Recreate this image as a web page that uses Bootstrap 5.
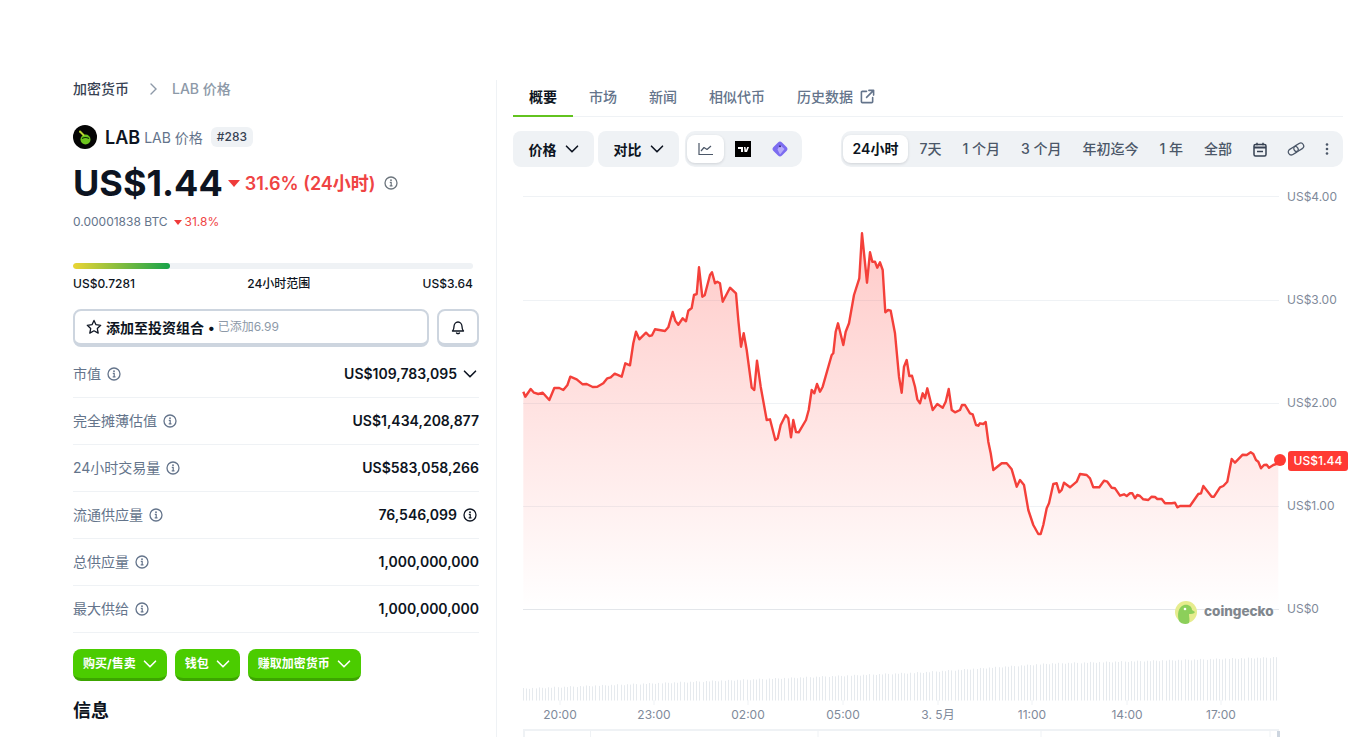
<!DOCTYPE html>
<html lang="zh-CN">
<head>
  <meta charset="UTF-8" />
  <title>LAB 价格</title>
  <link href="https://cdn.jsdelivr.net/npm/bootstrap@5.3.3/dist/css/bootstrap.min.css" rel="stylesheet" />
  <style>
    html, body {
      height: 100%;
      overflow: hidden;
      background: #fff;
    }
    body {
      font-family: Inter, "Noto Sans CJK SC", sans-serif;
      font-size: 14px;
      color: #0d1421;
    }
    .page-wrap { padding: 80px 0 0 73px; height: 737px; }
    .left-col { width: 423px; padding-right: 17px; flex: none; }
    .right-col { width: 847px; border-left: 1px solid #eff2f5; padding-left: 16px; flex: none; }

    .crumbs { line-height: 18px; font-weight: 500; color: #364152; }
    .crumbs .sep { margin: 0 13px 0 20px; color: #8d99a8; }
    .crumbs .here { color: #8d99a8; }
    .title-row { margin-top: 27px; height: 24px; }
    .coin-logo { width: 24px; height: 24px; margin-right: 8px; }
    .coin-sym { font-size: 18px; font-weight: 600; margin-right: 4px; }
    .coin-sub { color: #64748b; }
    .rank-tag { margin-left: 8px; padding: 0 6px; height: 20px; line-height: 20px; font-size: 12px; font-weight: 500; background: #eff2f5; border-radius: 6px; color: #364152; }
    .price-row { margin-top: 12px; height: 44px; }
    .price-big { font-size: 36px; font-weight: 700; line-height: 44px; }
    .tri { width: 0; height: 0; border-left: 6px solid transparent; border-right: 6px solid transparent; border-top: 7px solid #ef3b3a; margin: 0 5px 0 5px; }
    .price-chg { font-size: 18px; font-weight: 600; color: #ef4444; }
    .btc-row { margin-top: 8px; line-height: 18px; font-size: 12px; color: #64748b; }
    .btc-row .tri { border-left-width: 4px; border-right-width: 4px; border-top-width: 5px; margin: 0 3px 0 6px; }
    .btc-row .down { color: #ef4444; }

    .range-track { margin-top: 32px; width: 400px; height: 6px; background: #eff2f5; border-radius: 3px; overflow: hidden; }
    .range-fill { height: 6px; border-radius: 3px; background: linear-gradient(90deg, #ebd534, #16a34a); }
    .range-labels { width: 400px; margin-top: 6px; line-height: 18px; font-size: 12px; font-weight: 500; color: #0d1421; }

    .add-row { margin-top: 16px; gap: 8px; }
    .out-btn { height: 38px; background: #fff; border: 2px solid #cdd5df; border-bottom-width: 4px; border-radius: 8px; padding: 0 11px; }
    .out-btn:hover { background: #fff; border-color: #cdd5df; }
    .out-btn.wide { width: 357px; font-size: 14px; font-weight: 700; color: #0d1421; }
    .out-btn.bell { width: 42px; justify-content: center; }
    .out-btn small { font-size: 12px; font-weight: 400; color: #8d99a8; }
    .dot-sep { margin: 0 3px 0 4px; }

    .stat-list { margin-top: 4px; width: 406px; }
    .stat-line { height: 47px; border-bottom: 1px solid #eff2f5; padding-bottom: 1px; }
    .stat-name { color: #64748b; gap: 6px; }
    .stat-val { font-weight: 600; color: #0d1421; gap: 6px; }
    .tail-ico { margin-right: 2px; }

    .green-row { margin-top: 16px; gap: 8px; }
    .green-btn { height: 32px; padding: 0 10px; gap: 7px; font-size: 12px; font-weight: 700; color: #fff; background: #4bcc00; border: 0; border-bottom: 3px solid #3ca500; border-radius: 8px; }
    .green-btn:hover { color: #fff; background: #4bcc00; border-bottom-color: #3ca500; }
    .info-head { margin: 16px 0 0; font-size: 18px; font-weight: 700; line-height: 28px; }

    .tab-row { width: 830px; height: 37px; border-bottom: 1px solid #eff2f5; }
    .tab-row .nav-link { height: 37px; padding: 8px 16px 0; line-height: 18px; font-weight: 500; color: #64748b; border-bottom: 2px solid transparent; gap: 7px; }
    .tab-row .nav-link.active { color: #0d1421; font-weight: 600; border-bottom-color: #62c31f; }
    .tab-ext { margin-top: 1px; }

    .tool-row { width: 830px; margin-top: 14px; height: 36px; }
    .tool-btn { width: 81px; height: 36px; padding: 0; gap: 8px; justify-content: center; font-size: 14px; font-weight: 600; color: #0d1421; background: #eff2f5; border: 0; border-radius: 8px; margin-right: 4px; }
    .tool-btn:hover { background: #eff2f5; color: #0d1421; }
    .pill-group { height: 36px; background: #eff2f5; border-radius: 10px; padding: 4px 2px; gap: 1px; }
    .types { margin-left: 2px; width: 117px; gap: 0; }
    .type-item { width: 37px; height: 28px; border-radius: 8px; }
    .pill-active { background: #fff; box-shadow: 0 1px 3px rgba(13, 20, 33, .14); }
    .ranges { margin-left: auto; }
    .range-item { height: 28px; padding: 0 10px; border-radius: 8px; line-height: 28px; font-weight: 500; color: #4b5768; white-space: nowrap; }
    .range-item.pill-active { font-weight: 600; color: #0d1421; }
    .range-item.ico-link { padding: 0 9px; }
    .range-item.ico-dots { padding: 0 12px 0 10px; }

    .chart-svg { display: block; margin-top: 13px; overflow: visible; }
    .chart-svg text { font-family: Inter, "Noto Sans CJK SC", sans-serif; font-size: 12px; fill: #7f8a9a; }
    .chart-svg .tag-text { fill: #fff; font-weight: 500; }
    .chart-svg .wm-text { fill: #80878e; font-size: 13.5px; font-weight: 800; }
  </style>
</head>
<body>
  <svg width="0" height="0" class="position-absolute">
    <symbol id="i-chev" viewBox="0 0 14 14"><path d="M1.5 4.2 7 9.8l5.5-5.6" fill="none" stroke="currentColor" stroke-width="1.6" stroke-linecap="round" stroke-linejoin="round"/></symbol>
    <symbol id="i-info" viewBox="0 0 14 14"><circle cx="7" cy="7" r="6" fill="none" stroke="currentColor" stroke-width="1.3"/><circle cx="7" cy="4.2" r=".9" fill="currentColor"/><path d="M5.8 6.3H7.2V9.8M5.7 9.9H8.5" fill="none" stroke="currentColor" stroke-width="1.2"/></symbol>
  </svg>

  <div class="page-wrap d-flex">
    <div class="left-col">
      <div class="crumbs d-flex align-items-center">
        <span>加密货币</span>
        <svg class="sep" width="10" height="12" viewBox="0 0 10 12"><path d="M2 1l5 5-5 5" fill="none" stroke="currentColor" stroke-width="1.4" stroke-linecap="round"/></svg>
        <span class="here">LAB 价格</span>
      </div>

      <div class="title-row d-flex align-items-center">
        <svg class="coin-logo" viewBox="0 0 24 24">
          <circle cx="12" cy="12" r="12" fill="#050505"/>
          <circle cx="12.5" cy="14.5" r="5" fill="#6cc51d"/>
          <path d="M7 6.5l3.5 3.5" stroke="#b9d62e" stroke-width="2" stroke-linecap="round"/>
          <path d="M9 13.5q3.500-2 7 0" stroke="#0d2a05" stroke-width="1.1" fill="none"/>
        </svg>
        <span class="coin-sym">LAB</span>
        <span class="coin-sub">LAB 价格</span>
        <span class="rank-tag">#283</span>
      </div>

      <div class="price-row d-flex align-items-center">
        <span class="price-big">US$1.44</span>
        <span class="tri"></span>
        <span class="price-chg">31.6% (24小时)</span>
        <svg class="ms-2 text-secondary" width="14" height="14"><use href="#i-info"/></svg>
      </div>

      <div class="btc-row d-flex align-items-center">
        <span>0.00001838 BTC</span><span class="tri"></span><span class="down">31.8%</span>
      </div>

      <div class="range-track"><div class="range-fill" style="width: 97px"></div></div>
      <div class="range-labels d-flex justify-content-between">
        <span>US$0.7281</span><span>24小时范围</span><span>US$3.64</span>
      </div>

      <div class="add-row d-flex">
        <button type="button" class="btn out-btn wide d-flex align-items-center">
          <svg width="16" height="16" viewBox="0 0 16 16" class="me-1"><path d="M8 1.400l2 4.300 4.700.6-3.400 3.200.9 4.600L8 11.800l-4.200 2.300.9-4.600L1.300 6.300 6 5.700z" fill="none" stroke="#0d1421" stroke-width="1.300" stroke-linejoin="round"/></svg>
          <span>添加至投资组合</span>
          <span class="dot-sep">•</span>
          <small>已添加6.99</small>
        </button>
        <button type="button" class="btn out-btn bell d-flex align-items-center">
          <svg width="14" height="15" viewBox="0 0 14 15"><path d="M1.500 11h11c-1-1-1.500-2-1.500-4.500C11 4 9.300 2 7 2S3 4 3 6.500C3 9 2.500 10 1.500 11zM5.500 13q1.500 1.300 3 0" fill="none" stroke="#0d1421" stroke-width="1.300" stroke-linejoin="round" stroke-linecap="round"/></svg>
        </button>
      </div>

      <div class="stat-list">
        <div class="stat-line d-flex justify-content-between align-items-center">
          <span class="stat-name d-flex align-items-center">市值 <svg width="14" height="14"><use href="#i-info"/></svg></span>
          <span class="stat-val d-flex align-items-center">US$109,783,095 <svg class="tail-ico" width="14" height="14"><use href="#i-chev"/></svg></span>
        </div>
        <div class="stat-line d-flex justify-content-between align-items-center">
          <span class="stat-name d-flex align-items-center">完全摊薄估值 <svg width="14" height="14"><use href="#i-info"/></svg></span>
          <span class="stat-val">US$1,434,208,877</span>
        </div>
        <div class="stat-line d-flex justify-content-between align-items-center">
          <span class="stat-name d-flex align-items-center">24小时交易量 <svg width="14" height="14"><use href="#i-info"/></svg></span>
          <span class="stat-val">US$583,058,266</span>
        </div>
        <div class="stat-line d-flex justify-content-between align-items-center">
          <span class="stat-name d-flex align-items-center">流通供应量 <svg width="14" height="14"><use href="#i-info"/></svg></span>
          <span class="stat-val d-flex align-items-center">76,546,099 <svg class="tail-ico" width="14" height="14"><use href="#i-info"/></svg></span>
        </div>
        <div class="stat-line d-flex justify-content-between align-items-center">
          <span class="stat-name d-flex align-items-center">总供应量 <svg width="14" height="14"><use href="#i-info"/></svg></span>
          <span class="stat-val">1,000,000,000</span>
        </div>
        <div class="stat-line d-flex justify-content-between align-items-center">
          <span class="stat-name d-flex align-items-center">最大供给 <svg width="14" height="14"><use href="#i-info"/></svg></span>
          <span class="stat-val">1,000,000,000</span>
        </div>
      </div>

      <div class="green-row d-flex">
        <button type="button" class="btn green-btn d-flex align-items-center">购买/售卖 <svg width="14" height="14"><use href="#i-chev"/></svg></button>
        <button type="button" class="btn green-btn d-flex align-items-center">钱包 <svg width="14" height="14"><use href="#i-chev"/></svg></button>
        <button type="button" class="btn green-btn d-flex align-items-center">赚取加密货币 <svg width="14" height="14"><use href="#i-chev"/></svg></button>
      </div>

      <h2 class="info-head">信息</h2>
    </div>

    <div class="right-col">
      <ul class="nav tab-row">
        <li class="nav-item"><a class="nav-link active" href="#">概要</a></li>
        <li class="nav-item"><a class="nav-link" href="#">市场</a></li>
        <li class="nav-item"><a class="nav-link" href="#">新闻</a></li>
        <li class="nav-item"><a class="nav-link" href="#">相似代币</a></li>
        <li class="nav-item"><a class="nav-link d-flex" href="#">历史数据
          <svg width="15" height="15" viewBox="0 0 16 16" class="tab-ext"><path d="M7 2.500H2.500a1 1 0 0 0-1 1v10a1 1 0 0 0 1 1h10a1 1 0 0 0 1-1V9M9.500 1.500h5v5M14.500 1.500 7 9" fill="none" stroke="currentColor" stroke-width="1.700" stroke-linecap="round" stroke-linejoin="round"/></svg></a></li>
      </ul>

      <div class="tool-row d-flex">
        <button type="button" class="btn tool-btn d-flex align-items-center">价格 <svg width="14" height="14"><use href="#i-chev"/></svg></button>
        <button type="button" class="btn tool-btn d-flex align-items-center">对比 <svg width="14" height="14"><use href="#i-chev"/></svg></button>
        <div class="pill-group types d-flex">
          <span class="type-item pill-active d-flex align-items-center justify-content-center">
            <svg width="16" height="14" viewBox="0 0 16 14"><path d="M1 1v11.500h14" fill="none" stroke="#4b5768" stroke-width="1.200"/><path d="M3 9l3-3.500 3 2 4-3.500" fill="none" stroke="#4b5768" stroke-width="1.200" stroke-linejoin="round"/></svg>
          </span>
          <span class="type-item d-flex align-items-center justify-content-center">
            <svg width="16" height="16" viewBox="0 0 16 16"><rect width="16" height="16" fill="#000"/><path d="M3 6h5v5H6V8H3zM9 6h1.500l.5 3.300L12.200 6H14l-2 5H9.500z" fill="#fff"/></svg>
          </span>
          <span class="type-item d-flex align-items-center justify-content-center">
            <svg width="18" height="18" viewBox="0 0 18 18"><rect x="3" y="3" width="12" height="12" rx="2.800" transform="rotate(45 9 9)" fill="#7c6cf0"/><path d="M9 5 13.500 9 9 14.500 6.500 9.500z" fill="#b6a9fa"/><circle cx="9" cy="6.300" r="1" fill="#33297a"/></svg>
          </span>
        </div>
        <div class="pill-group ranges d-flex">
          <span class="range-item pill-active">24小时</span>
          <span class="range-item">7天</span>
          <span class="range-item">1 个月</span>
          <span class="range-item">3 个月</span>
          <span class="range-item">年初迄今</span>
          <span class="range-item">1 年</span>
          <span class="range-item">全部</span>
          <span class="range-item d-flex align-items-center">
            <svg width="14" height="15" viewBox="0 0 14 15"><rect x="1" y="2.500" width="12" height="11.500" rx="1.500" fill="none" stroke="#364152" stroke-width="1.500"/><path d="M1 5.500h12" stroke="#364152" stroke-width="2"/><path d="M4 .8v2.500M10 .8v2.500" stroke="#364152" stroke-width="1.500"/><path d="M4 9.500h6" stroke="#364152" stroke-width="1.500"/></svg>
          </span>
          <span class="range-item ico-link d-flex align-items-center">
            <svg width="18" height="14" viewBox="0 0 18 14"><g fill="none" stroke="#4b5768" stroke-width="1.300" transform="rotate(-32 9 7)"><rect x="0.500" y="4" width="10.500" height="6" rx="3"/><rect x="7" y="4" width="10.500" height="6" rx="3"/></g></svg>
          </span>
          <span class="range-item ico-dots d-flex align-items-center">
            <svg width="4" height="14" viewBox="0 0 4 14"><circle cx="2" cy="2.500" r="1.300" fill="#4b5768"/><circle cx="2" cy="7" r="1.300" fill="#4b5768"/><circle cx="2" cy="11.500" r="1.300" fill="#4b5768"/></svg>
          </span>
        </div>
      </div>

      <svg id="chart" class="chart-svg" width="830" height="557" viewBox="513 180 830 557"></svg>
    </div>
  </div>

  <script src="https://cdn.jsdelivr.net/npm/bootstrap@5.3.3/dist/js/bootstrap.bundle.min.js"></script>
  <script>
    // price line, traced from the 24h view
    const partA = [[10,515],[16,530],[32,507],[42,518],[55,522],[68,518],[88,540],[103,504],[118,504],[130,510],[142,496],[151,470],[170,478],[188,493],[200,492],[218,501],[232,500],[250,490],[262,475],[272,472],[284,461],[305,470],[316,430],[330,436],[340,370],[348,335],[358,358],[378,338],[388,348],[396,346],[405,328],[435,333],[445,322],[458,276],[466,302],[475,314],[488,295],[498,304],[505,272],[515,264],[522,225],[530,222],[537,142],[547,230],[554,226],[570,165],[576,157],[585,190],[592,185],[600,190],[608,245],[630,203],[648,220],[655,300],[663,380],[671,340],[680,390],[695,503],[703,510],[711,422],[722,500],[740,600],[750,598],[766,660],[773,655],[782,615],[797,585],[805,595],[813,652],[820,600],[828,636],[836,637],[858,600],[866,570],[875,510],[883,520],[891,492],[900,515],[908,500],[935,405],[940,400],[947,335],[954,310],[970,375],[977,335],[987,310],[1002,225],[1018,175],[1026,40],[1041,188],[1050,97],[1057,125],[1065,125],[1072,143],[1080,127],[1088,150],[1096,277],[1104,270],[1112,272],[1125,340],[1137,470],[1145,518],[1152,440],[1160,420],[1168,468],[1176,467],[1185,500],[1192,538],[1200,550]];
    const partB = [[68,100],[75,115],[82,85],[98,150],[112,132],[128,143],[137,125],[146,87],[155,150],[165,157],[180,150],[186,135],[195,135],[210,160],[218,163],[228,195],[235,197],[240,190],[250,192],[257,186],[265,245],[272,280],[280,330],[305,310],[320,310],[335,328],[350,380],[360,360],[372,375],[385,450],[400,495],[415,522],[422,522],[430,495],[440,445],[447,430],[460,372],[470,370],[478,397],[485,390],[492,368],[510,382],[530,365],[540,342],[560,345],[570,355],[580,382],[598,382],[612,362],[622,365],[635,383],[645,385],[660,407],[672,403],[680,408],[690,400],[697,400],[705,415],[712,405],[720,408],[730,418],[745,420],[755,410],[765,411],[772,417],[785,417],[795,430],[815,430],[825,428],[832,442],[840,438],[870,438],[895,402],[903,400],[910,378],[935,410],[942,410],[960,382],[970,378],[982,365],[995,297],[1005,308],[1028,284],[1040,285],[1052,277],[1060,282],[1068,300],[1075,305],[1083,325],[1092,315],[1100,314],[1107,323],[1120,315],[1135,310]];

    const pts = partA.map(p => [520 + p[0] / 3, 220 + p[1] / 3])
      .concat(partB.map(p => [900 + p[0] / 3, 360 + p[1] / 3]));
    const line = pts.map(p => p[0].toFixed(1) + ',' + p[1].toFixed(1)).join(' ');
    const first = pts[0], last = pts[pts.length - 1];

    let out = '<defs><linearGradient id="areaFill" gradientUnits="userSpaceOnUse" x1="0" y1="233" x2="0" y2="609">' +
      '<stop offset="0" stop-color="#ff3a33" stop-opacity=".27"/><stop offset="1" stop-color="#ff3a33" stop-opacity="0"/></linearGradient></defs>';

    // grid and y labels
    [['US$4.00', 196, 201], ['US$3.00', 300, 304], ['US$2.00', 403, 407], ['US$1.00', 506, 510], ['US$0', 609, 613]].forEach(g => {
      out += '<line x1="523" x2="1279" y1="' + (g[1] + .5) + '" y2="' + (g[1] + .5) + '" stroke="' + (g[1] === 609 ? '#e3e6ea' : '#eff2f5') + '"/>';
      out += '<text x="1287" y="' + g[2] + '">' + g[0] + '</text>';
    });

    out += '<polygon points="' + first[0] + ',609 ' + line + ' ' + last[0] + ',609" fill="url(#areaFill)"/>';
    out += '<polyline points="' + line + '" fill="none" stroke="#f4403a" stroke-width="2.4" stroke-linejoin="round"/>';
    out += '<circle cx="1280" cy="460" r="6" fill="#ff3a33"/>';
    out += '<rect x="1288" y="451" width="60" height="20" rx="3" fill="#ff3a33"/>';
    out += '<text class="tag-text" x="1318" y="465" text-anchor="middle">US$1.44</text>';

    // coingecko watermark
    out += '<circle cx="1186" cy="612" r="11" fill="#e6ec8e"/>' +
      '<path d="M1179 621c-2-6-1-14 5-16 5-1 8 2 8 5l3 2c-1 2-4 2-6 2 0 3 1 6 0 9-3 2-8 1-10-2z" fill="#8ccf5a"/>' +
      '<circle cx="1185" cy="609" r="1.300" fill="#fff"/>';
    out += '<text class="wm-text" x="1204" y="616">coingecko</text>';

    // volume bars
    const tops = [[523, 688], [800, 677], [920, 672], [1050, 663], [1270, 657], [1279, 656]];
    function topAt(x) {
      for (let i = 1; i < tops.length; i++) {
        if (x <= tops[i][0]) {
          const t = (x - tops[i - 1][0]) / (tops[i][0] - tops[i - 1][0]);
          return tops[i - 1][1] + t * (tops[i][1] - tops[i - 1][1]);
        }
      }
      return 656;
    }
    for (let x = 523, i = 0; x < 1279; x += 3.15, i++) {
      const y = topAt(x) + (i * 7 % 5) * 0.3;
      out += '<rect x="' + Math.round(x) + '" y="' + y.toFixed(1) + '" width="1" height="' + (700.5 - y).toFixed(1) + '" fill="#e6eaee"/>';
    }

    // x axis
    [['20:00', 560], ['23:00', 654], ['02:00', 748], ['05:00', 843], ['3. 5月', 938], ['11:00', 1032], ['14:00', 1127], ['17:00', 1221]].forEach(t => {
      out += '<line x1="' + t[1] + '" x2="' + t[1] + '" y1="700" y2="705" stroke="#eff2f5"/>';
      out += '<text x="' + t[1] + '" y="719" text-anchor="middle">' + t[0] + '</text>';
    });

    // navigator strip at the bottom
    out += '<rect x="523" y="729" width="756" height="2" fill="#eff2f5"/>';
    out += '<rect x="523" y="729" width="2" height="8" fill="#eff2f5"/>';
    [590.500, 818, 1041, 1270].forEach(x => {
      out += '<line x1="' + x + '" x2="' + x + '" y1="731" y2="737" stroke="#eff2f5"/>';
    });
    out += '<rect x="1277" y="731" width="3" height="6" fill="#cdd5df"/>';

    document.getElementById('chart').innerHTML = out;
  </script>
</body>
</html>
